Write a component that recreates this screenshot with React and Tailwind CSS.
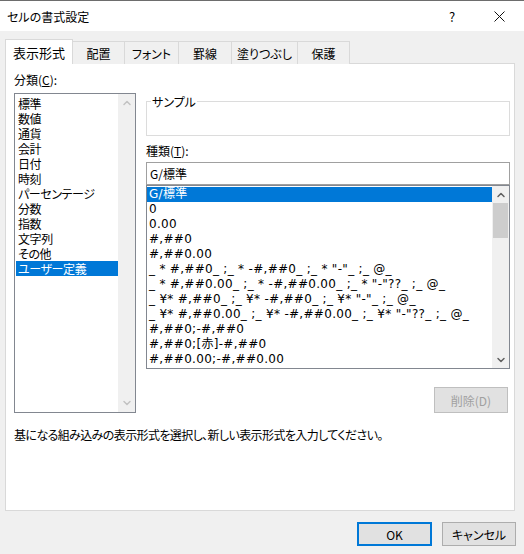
import { ChevronUp, ChevronDown } from "lucide-react";

const categories = [
  "標準",
  "数値",
  "通貨",
  "会計",
  "日付",
  "時刻",
  "パーセンテージ",
  "分数",
  "指数",
  "文字列",
  "その他",
  "ユーザー定義",
];

const formats = [
  "G/標準",
  "0",
  "0.00",
  "#,##0",
  "#,##0.00",
  '_ * #,##0_ ;_ * -#,##0_ ;_ * "-"_ ;_ @_ ',
  '_ * #,##0.00_ ;_ * -#,##0.00_ ;_ * "-"??_ ;_ @_ ',
  '_ ¥* #,##0_ ;_ ¥* -#,##0_ ;_ ¥* "-"_ ;_ @_ ',
  '_ ¥* #,##0.00_ ;_ ¥* -#,##0.00_ ;_ ¥* "-"??_ ;_ @_ ',
  "#,##0;-#,##0",
  "#,##0;[赤]-#,##0",
  "#,##0.00;-#,##0.00",
];

const tabs = [
  { label: "配置", w: "w-[53px]" },
  { label: "フォント", w: "w-[55px]" },
  { label: "罫線", w: "w-[54px]" },
  { label: "塗りつぶし", w: "w-[67px]" },
  { label: "保護", w: "w-[53px]" },
];

export default function App() {
  return (
    <div className="w-[524px] h-[554px] bg-[#f0f0f0] text-[12px] leading-[15px] text-black font-['Noto_Sans_CJK_JP',sans-serif] [font-feature-settings:'palt'] overflow-hidden">
      {/* タイトルバー */}
      <div className="h-[31px] bg-white border-t border-[#6d6d6d] flex items-center pl-[7px]">
        <span className="flex-1">セルの書式設定</span>
        <span className="w-[10px] text-[13px] mr-[35px]">?</span>
        <svg width="11" height="11" viewBox="0 0 11 11" className="mr-[19px]">
          <path d="M0.5 0.5 L10.5 10.5 M10.5 0.5 L0.5 10.5" stroke="#111" strokeWidth="1" />
        </svg>
      </div>

      {/* タブ */}
      <div className="mt-[8px] pl-[5px] h-[25px] flex items-end">
        <div className="relative z-10 w-[68px] h-[25px] bg-white border border-b-0 border-[#d9d9d9] flex items-center justify-center text-[13px]">
          表示形式
        </div>
        {tabs.map(t => (
          <div
            key={t.label}
            className={`-ml-px ${t.w} h-[23px] bg-[#f0f0f0] border border-b-0 border-[#d9d9d9] flex items-center justify-center text-[12px]`}
          >
            {t.label}
          </div>
        ))}
      </div>

      {/* パネル */}
      <div className="-mt-px ml-[5px] w-[510px] h-[448px] bg-white border border-[#d9d9d9] pl-[8px]">
        <div className="flex">
          {/* 分類 */}
          <div className="w-[122px] flex flex-col">
            <div className="mt-[8px] h-[15px]">
              分類(<span className="underline">C</span>):
            </div>
            <div className="mt-[6px] h-[320px] border border-[#828790] flex">
              <div className="flex-1 pt-[2px]">
                {categories.map((c, i) => (
                  <div
                    key={c}
                    className={`h-[15px] ml-px pl-[2px] whitespace-nowrap tracking-[-0.4px] ${
                      i === categories.length - 1 ? "bg-[#0078d7] text-white" : ""
                    }`}
                  >
                    {c}
                  </div>
                ))}
              </div>
              <div className="w-[17px] bg-[#f0f0f0] flex flex-col justify-between items-center py-[3px]">
                <ChevronUp size={12} strokeWidth={3} color="#c2c2c2" />
                <ChevronDown size={12} strokeWidth={3} color="#c2c2c2" />
              </div>
            </div>
          </div>

          {/* 右側 */}
          <div className="ml-[10px] w-[364px] flex flex-col">
            <fieldset className="mt-[30px] h-[42px] border border-[#dcdcdc]">
              <legend className="ml-[4px] px-px leading-[15px]">サンプル</legend>
            </fieldset>
            <div className="mt-[7px] h-[15px]">
              種類(<span className="underline">T</span>):
            </div>
            <div className="mt-[4px] h-[23px] border border-[#a0a0a0] flex items-center pl-[3px]">
              G/標準
            </div>
            <div className="h-[184px] border border-[#828790] flex">
              <div className="flex-1 pt-px overflow-hidden font-['DejaVu_Sans','Noto_Sans_CJK_JP',sans-serif] text-[12px] tracking-[0.3px]">
                {formats.map((f, i) => (
                  <div
                    key={i}
                    className={`h-[15px] pl-[2px] whitespace-pre ${
                      i === 0 ? "bg-[#0078d7] text-white" : ""
                    }`}
                  >
                    {f}
                  </div>
                ))}
              </div>
              <div className="w-[17px] bg-[#f0f0f0] flex flex-col items-center">
                <div className="h-[17px] flex items-center justify-center">
                  <ChevronUp size={12} strokeWidth={3} color="#606060" />
                </div>
                <div className="w-[15px] h-[35px] bg-[#cdcdcd]" />
                <div className="flex-1" />
                <div className="h-[17px] flex items-center justify-center">
                  <ChevronDown size={12} strokeWidth={3} color="#606060" />
                </div>
              </div>
            </div>
            <div className="mt-[18px] flex justify-end pr-[2px]">
              <div className="w-[74px] h-[26px] bg-[#e1e1e1] border border-[#bfbfbf] text-[#a0a0a0] flex items-center justify-center">
                削除(D)
              </div>
            </div>
          </div>
        </div>

        <div className="mt-[14px] whitespace-nowrap tracking-[-0.6px]">
          基になる組み込みの表示形式を選択し、新しい表示形式を入力してください。
        </div>
      </div>

      {/* ボタン */}
      <div className="mt-[11px] flex justify-end gap-[10px] pr-[8px]">
        <div className="w-[75px] h-[24px] bg-[#e1e1e1] border-2 border-[#0078d7] flex items-center justify-center">
          OK
        </div>
        <div className="w-[74px] h-[24px] bg-[#e1e1e1] border border-[#adadad] flex items-center justify-center">
          キャンセル
        </div>
      </div>
    </div>
  );
}
